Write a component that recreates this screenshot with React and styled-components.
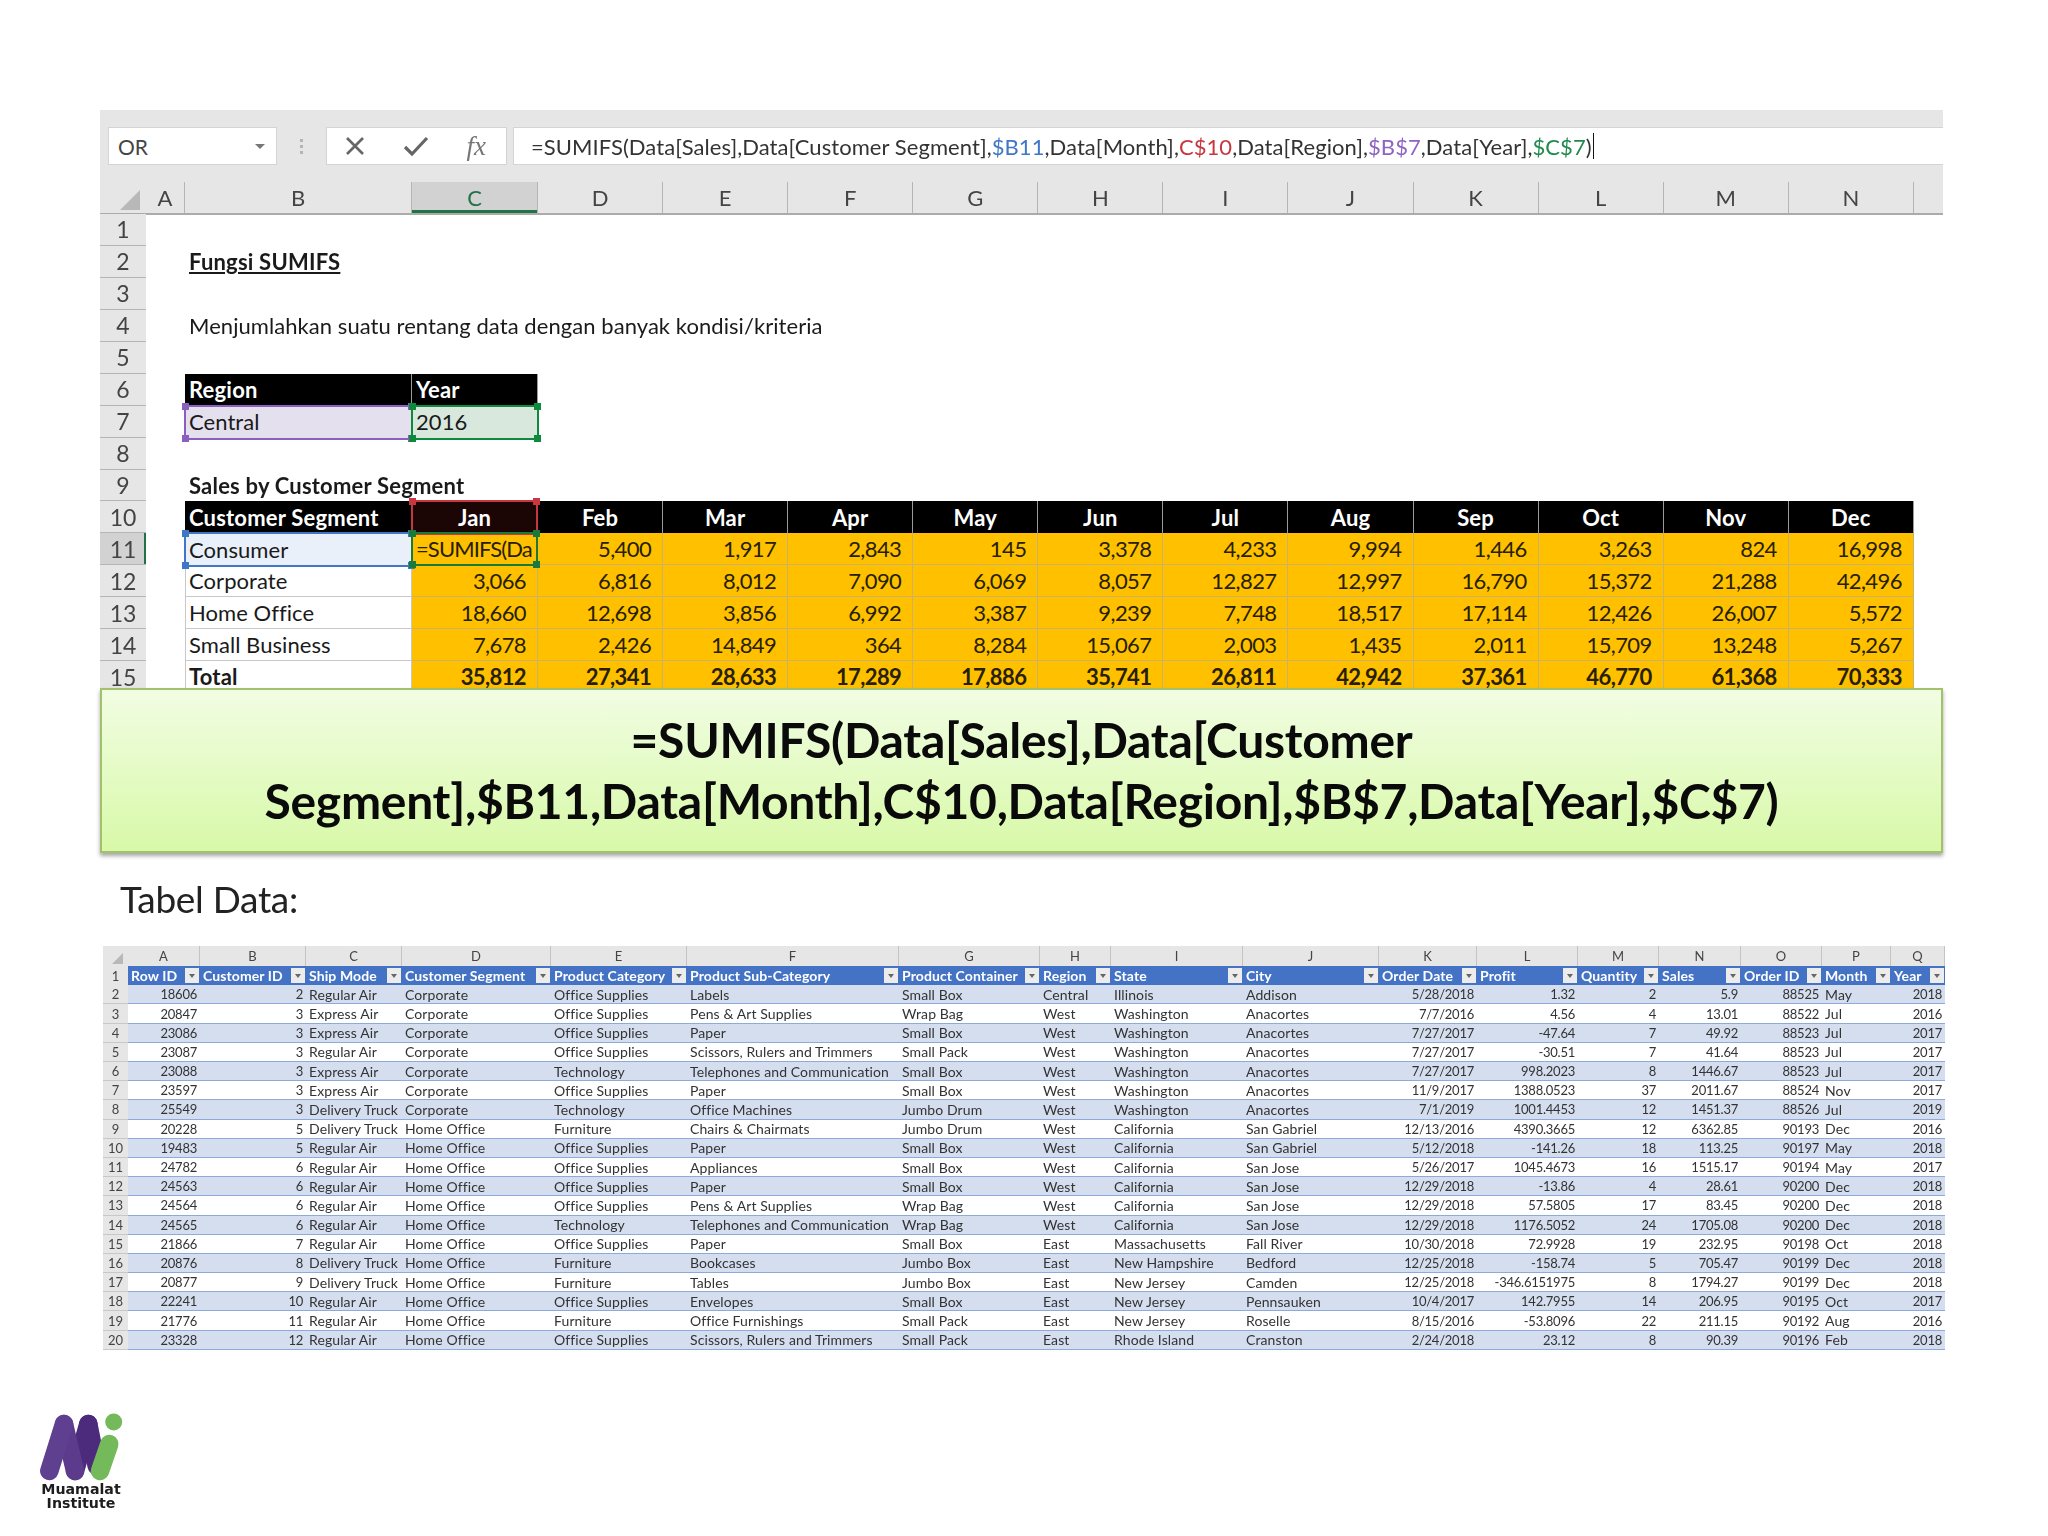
import React from "react";
import styled, { createGlobalStyle, css } from "styled-components";

const GlobalStyle = createGlobalStyle`
  html, body {
    margin: 0;
    padding: 0;
    background: #fff;
  }
  body {
    font-family: Lato, "Open Sans", sans-serif;
    color: #1a1a1a;
  }
`;

const MONTHS = ["Jan", "Feb", "Mar", "Apr", "May", "Jun", "Jul", "Aug", "Sep", "Oct", "Nov", "Dec"];
const LETTERS = ["A", "B", "C", "D", "E", "F", "G", "H", "I", "J", "K", "L", "M", "N"];

const SALES = [
  ["Corporate", "3,066", "6,816", "8,012", "7,090", "6,069", "8,057", "12,827", "12,997", "16,790", "15,372", "21,288", "42,496"],
  ["Home Office", "18,660", "12,698", "3,856", "6,992", "3,387", "9,239", "7,748", "18,517", "17,114", "12,426", "26,007", "5,572"],
  ["Small Business", "7,678", "2,426", "14,849", "364", "8,284", "15,067", "2,003", "1,435", "2,011", "15,709", "13,248", "5,267"],
];
const CONSUMER = ["5,400", "1,917", "2,843", "145", "3,378", "4,233", "9,994", "1,446", "3,263", "824", "16,998"];
const TOTALS = ["35,812", "27,341", "28,633", "17,289", "17,886", "35,741", "26,811", "42,942", "37,361", "46,770", "61,368", "70,333"];

const DATA_COLUMNS = [
  ["A", "Row ID", 72, true],
  ["B", "Customer ID", 106, true],
  ["C", "Ship Mode", 96, false],
  ["D", "Customer Segment", 149, false],
  ["E", "Product Category", 136, false],
  ["F", "Product Sub-Category", 212, false],
  ["G", "Product Container", 141, false],
  ["H", "Region", 71, false],
  ["I", "State", 132, false],
  ["J", "City", 136, false],
  ["K", "Order Date", 98, true],
  ["L", "Profit", 101, true],
  ["M", "Quantity", 81, true],
  ["N", "Sales", 82, true],
  ["O", "Order ID", 81, true],
  ["P", "Month", 69, false],
  ["Q", "Year", 54, true],
];

const DATA_ROWS = [
  ["18606", "2", "Regular Air", "Corporate", "Office Supplies", "Labels", "Small Box", "Central", "Illinois", "Addison", "5/28/2018", "1.32", "2", "5.9", "88525", "May", "2018"],
  ["20847", "3", "Express Air", "Corporate", "Office Supplies", "Pens & Art Supplies", "Wrap Bag", "West", "Washington", "Anacortes", "7/7/2016", "4.56", "4", "13.01", "88522", "Jul", "2016"],
  ["23086", "3", "Express Air", "Corporate", "Office Supplies", "Paper", "Small Box", "West", "Washington", "Anacortes", "7/27/2017", "-47.64", "7", "49.92", "88523", "Jul", "2017"],
  ["23087", "3", "Regular Air", "Corporate", "Office Supplies", "Scissors, Rulers and Trimmers", "Small Pack", "West", "Washington", "Anacortes", "7/27/2017", "-30.51", "7", "41.64", "88523", "Jul", "2017"],
  ["23088", "3", "Express Air", "Corporate", "Technology", "Telephones and Communication", "Small Box", "West", "Washington", "Anacortes", "7/27/2017", "998.2023", "8", "1446.67", "88523", "Jul", "2017"],
  ["23597", "3", "Express Air", "Corporate", "Office Supplies", "Paper", "Small Box", "West", "Washington", "Anacortes", "11/9/2017", "1388.0523", "37", "2011.67", "88524", "Nov", "2017"],
  ["25549", "3", "Delivery Truck", "Corporate", "Technology", "Office Machines", "Jumbo Drum", "West", "Washington", "Anacortes", "7/1/2019", "1001.4453", "12", "1451.37", "88526", "Jul", "2019"],
  ["20228", "5", "Delivery Truck", "Home Office", "Furniture", "Chairs & Chairmats", "Jumbo Drum", "West", "California", "San Gabriel", "12/13/2016", "4390.3665", "12", "6362.85", "90193", "Dec", "2016"],
  ["19483", "5", "Regular Air", "Home Office", "Office Supplies", "Paper", "Small Box", "West", "California", "San Gabriel", "5/12/2018", "-141.26", "18", "113.25", "90197", "May", "2018"],
  ["24782", "6", "Regular Air", "Home Office", "Office Supplies", "Appliances", "Small Box", "West", "California", "San Jose", "5/26/2017", "1045.4673", "16", "1515.17", "90194", "May", "2017"],
  ["24563", "6", "Regular Air", "Home Office", "Office Supplies", "Paper", "Small Box", "West", "California", "San Jose", "12/29/2018", "-13.86", "4", "28.61", "90200", "Dec", "2018"],
  ["24564", "6", "Regular Air", "Home Office", "Office Supplies", "Pens & Art Supplies", "Wrap Bag", "West", "California", "San Jose", "12/29/2018", "57.5805", "17", "83.45", "90200", "Dec", "2018"],
  ["24565", "6", "Regular Air", "Home Office", "Technology", "Telephones and Communication", "Wrap Bag", "West", "California", "San Jose", "12/29/2018", "1176.5052", "24", "1705.08", "90200", "Dec", "2018"],
  ["21866", "7", "Regular Air", "Home Office", "Office Supplies", "Paper", "Small Box", "East", "Massachusetts", "Fall River", "10/30/2018", "72.9928", "19", "232.95", "90198", "Oct", "2018"],
  ["20876", "8", "Delivery Truck", "Home Office", "Furniture", "Bookcases", "Jumbo Box", "East", "New Hampshire", "Bedford", "12/25/2018", "-158.74", "5", "705.47", "90199", "Dec", "2018"],
  ["20877", "9", "Delivery Truck", "Home Office", "Furniture", "Tables", "Jumbo Box", "East", "New Jersey", "Camden", "12/25/2018", "-346.6151975", "8", "1794.27", "90199", "Dec", "2018"],
  ["22241", "10", "Regular Air", "Home Office", "Office Supplies", "Envelopes", "Small Box", "East", "New Jersey", "Pennsauken", "10/4/2017", "142.7955", "14", "206.95", "90195", "Oct", "2017"],
  ["21776", "11", "Regular Air", "Home Office", "Furniture", "Office Furnishings", "Small Pack", "East", "New Jersey", "Roselle", "8/15/2016", "-53.8096", "22", "211.15", "90192", "Aug", "2016"],
  ["23328", "12", "Regular Air", "Home Office", "Office Supplies", "Scissors, Rulers and Trimmers", "Small Pack", "East", "Rhode Island", "Cranston", "2/24/2018", "23.12", "8", "90.39", "90196", "Feb", "2018"],
];

const dataTemplate = `25px ${DATA_COLUMNS.map((c) => c[2] + "px").join(" ")}`;

const Page = styled.div`
  width: 2048px;
  height: 1536px;
  padding-top: 110px;
  box-sizing: border-box;
  overflow: hidden;
  filter: blur(0.35px);
`;

const Sheet = styled.section`
  margin-left: 100px;
  width: 1843px;
  background: #fff;
`;

const FormulaBar = styled.div`
  height: 72px;
  box-sizing: border-box;
  background: #e6e6e6;
  padding: 17px 0 0 8px;
  display: flex;
  align-items: flex-start;
`;

const NameBox = styled.div`
  width: 169px;
  height: 38px;
  box-sizing: border-box;
  background: #fff;
  border: 1px solid #d4d4d4;
  padding: 0 11px 0 9px;
  display: flex;
  align-items: center;
  justify-content: space-between;
  font-size: 21px;
  color: #444;
`;

const Caret = styled.span`
  width: 0;
  height: 0;
  border-left: 5px solid transparent;
  border-right: 5px solid transparent;
  border-top: 5px solid #777;
`;

const Grip = styled.div`
  width: 49px;
  height: 38px;
  display: flex;
  flex-direction: column;
  align-items: center;
  justify-content: center;
  gap: 3px;
  i {
    width: 3px;
    height: 3px;
    background: #b5b5b5;
  }
`;

const ActionBox = styled.div`
  width: 181px;
  height: 38px;
  box-sizing: border-box;
  background: #fff;
  border: 1px solid #d4d4d4;
  display: flex;
  align-items: center;
  justify-content: space-between;
  padding: 0 20px 0 17px;
  color: #666;
`;

const Fx = styled.span`
  font-family: "Liberation Serif", serif;
  font-style: italic;
  font-size: 27px;
  color: #777;
  line-height: 1;
`;

const FormulaInput = styled.div`
  flex: 1;
  margin-left: 6px;
  height: 38px;
  box-sizing: border-box;
  background: #fff;
  border: 1px solid #d4d4d4;
  border-right: 0;
  padding-left: 17px;
  display: flex;
  align-items: center;
  font-size: 22px;
  letter-spacing: 0.06px;
  color: #333;
  white-space: pre;
`;

const Ref = styled.span`
  color: ${(p) => p.$color};
`;

const TextCaret = styled.span`
  width: 1px;
  height: 26px;
  background: #111;
  margin-left: 1px;
`;

const sheetGrid = css`
  display: grid;
  grid-template-columns: 46px 39px 227px 126px repeat(11, 125.09px) 1fr;
`;

const HeadRow = styled.div`
  ${sheetGrid}
  height: 31px;
  background: #e6e6e6;
  border-bottom: 2px solid #ababab;
  box-sizing: content-box;
  margin-bottom: -1px;
`;

const Corner = styled.div`
  position: relative;
  &::after {
    content: "";
    position: absolute;
    right: 6px;
    bottom: 3px;
    border-style: solid;
    border-width: 0 0 20px 20px;
    border-color: transparent transparent #b8b8b8 transparent;
  }
`;

const ColHead = styled.div`
  display: flex;
  align-items: center;
  justify-content: center;
  font-size: 22px;
  border-right: 1px solid #b5b5b5;
  background: ${(p) => (p.$active ? "#d2d2d2" : "transparent")};
  box-shadow: ${(p) => (p.$active ? "inset 0 -3px 0 #217346" : "none")};
  color: ${(p) => (p.$active ? "#217346" : "#444")};
`;

const Row = styled.div`
  ${sheetGrid}
  height: 31.95px;
`;

const RowHead = styled.div`
  display: flex;
  align-items: center;
  justify-content: center;
  font-size: 23px;
  box-sizing: border-box;
  border-bottom: 1px solid #b5b5b5;
  background: ${(p) => (p.$active ? "#d2d2d2" : "#e6e6e6")};
  color: #444;
  box-shadow: ${(p) => (p.$active ? "inset -2px 0 0 #217346" : "none")};
`;

const cellKinds = {
  plain: css`
    background: transparent;
  `,
  label: css`
    background: #fff;
    border-left: 1px solid #c8c8c8;
    border-right: 1px solid #c8c8c8;
    border-bottom: 1px solid #c8c8c8;
    padding-left: 3px;
  `,
  black: css`
    background: #000;
    color: #fff;
    font-weight: 700;
    border-right: 1px solid #9a9a9a;
  `,
  amber: css`
    background: #ffc000;
    border-right: 1px solid #cbb26a;
    border-bottom: 1px solid #cbb26a;
    color: #262000;
  `,
};

const Cell = styled.div`
  position: relative;
  box-sizing: border-box;
  min-width: 0;
  display: flex;
  align-items: center;
  padding: ${(p) => (p.$right ? "0 11px 0 0" : "0 0 0 4px")};
  justify-content: ${(p) => (p.$right ? "flex-end" : p.$center ? "center" : "flex-start")};
  ${(p) => p.$center && "padding: 0;"}
  font-size: 22px;
  letter-spacing: ${(p) => (p.$right ? "-0.6px" : p.$bold || p.$kind === "black" ? "0.2px" : "0.06px")};
  white-space: nowrap;
  font-weight: ${(p) => (p.$bold ? 700 : 400)};
  text-decoration: ${(p) => (p.$under ? "underline" : "none")};
  ${(p) => cellKinds[p.$kind || "plain"]}
  ${(p) => p.$fill && `background: ${p.$fill};`}
`;

const TightText = styled.span`
  letter-spacing: -0.9px;
`;

const RangeBox = styled.div`
  position: absolute;
  inset: -1px -1px -2px -1px;
  border: 2px solid ${(p) => p.$color};
  pointer-events: none;
  z-index: 3;
`;

const Handle = styled.i`
  position: absolute;
  width: 7px;
  height: 7px;
  background: ${(p) => p.$color};
  ${(p) => (p.$top ? "top: -4px;" : "bottom: -4px;")}
  ${(p) => (p.$left ? "left: -4px;" : "right: -4px;")}
`;

const Range = ({ color }) => (
  <RangeBox $color={color}>
    <Handle $color={color} $top $left />
    <Handle $color={color} $top />
    <Handle $color={color} $left />
    <Handle $color={color} />
  </RangeBox>
);

/* sits over the bottom few pixels of row 15 */
const Callout = styled.div`
  position: relative;
  z-index: 5;
  margin: -5.3px 0 0 100px;
  width: 1843px;
  height: 165px;
  box-sizing: border-box;
  background: linear-gradient(#f1fde3, #d8f9a8);
  border: 2px solid #a3c06a;
  box-shadow: 0 3px 4px rgba(0, 0, 0, 0.35);
  display: flex;
  align-items: center;
  justify-content: center;
  text-align: center;
  font-size: 48px;
  font-weight: 700;
  line-height: 61px;
  letter-spacing: -0.28px;
  color: #0a0a0a;
`;

const SectionTitle = styled.h2`
  margin: 23px 0 25px 120px;
  font-size: 37px;
  line-height: 45px;
  font-weight: 400;
  letter-spacing: -0.3px;
  color: #222;
`;

const DataTable = styled.section`
  margin-left: 103px;
  width: max-content;
`;

const DataHeadRow = styled.div`
  display: grid;
  grid-template-columns: ${dataTemplate};
  height: 20px;
  background: #e6e6e6;
`;

const DataCorner = styled.div`
  position: relative;
  &::after {
    content: "";
    position: absolute;
    right: 5px;
    bottom: 2px;
    border-style: solid;
    border-width: 0 0 11px 11px;
    border-color: transparent transparent #b8b8b8 transparent;
  }
`;

const DataLetter = styled.div`
  display: flex;
  align-items: center;
  justify-content: center;
  font-size: 13px;
  color: #444;
  border-right: 1px solid #c4c4c4;
`;

const DataRow = styled.div`
  display: grid;
  grid-template-columns: ${dataTemplate};
  height: ${(p) => (p.$title ? "19.5px" : "19.2px")};
  box-sizing: border-box;
  font-size: 14px;
  letter-spacing: 0.1px;
  background: ${(p) => (p.$title ? "#4472c4" : p.$band ? "#d4deef" : "#fff")};
  color: ${(p) => (p.$title ? "#fff" : "#333")};
  font-weight: ${(p) => (p.$title ? 700 : 400)};
  ${(p) => !p.$title && "border-bottom: 1px solid #8ea9db;"}
`;

const DataRowHead = styled.div`
  background: #e6e6e6;
  display: flex;
  align-items: center;
  justify-content: center;
  font-size: 13px;
  font-weight: 400;
  letter-spacing: 0;
  color: #444;
  box-shadow: 0 1px 0 #c8c8c8;
  position: relative;
`;

const DataCell = styled.div`
  display: flex;
  align-items: center;
  white-space: nowrap;
  min-width: 0;
  padding: 0 3px;
  justify-content: ${(p) => (p.$right ? "flex-end" : "flex-start")};
  ${(p) => p.$right && "font-size: 13px; letter-spacing: -0.24px;"}
`;

const TitleCell = styled.div`
  display: flex;
  align-items: center;
  justify-content: space-between;
  white-space: nowrap;
  min-width: 0;
  padding-left: 3px;
  padding-right: 1px;
`;

const FilterBtn = styled.span`
  flex: none;
  width: 14px;
  height: 15px;
  background: #ececec;
  display: flex;
  align-items: center;
  justify-content: center;
  &::after {
    content: "";
    border-left: 3.5px solid transparent;
    border-right: 3.5px solid transparent;
    border-top: 4px solid #666;
  }
`;

const LogoWrap = styled.div`
  margin: 62px 0 0 38px;
  width: 86px;
  display: flex;
  flex-direction: column;
  align-items: center;
`;

const LogoText = styled.div`
  font-family: "DejaVu Sans", sans-serif;
  font-weight: 700;
  font-size: 14.2px;
  line-height: 14.4px;
  text-align: center;
  color: #1d1d1d;
  margin-top: -2px;
`;

const Logo = () => (
  <LogoWrap>
    <svg width="86" height="72" viewBox="0 0 86 72" aria-hidden="true">
      <g fill="none" strokeLinecap="round" strokeWidth="18.5">
        <path d="M58.7 54L50.3 12" stroke="#4c2a7c" />
        <path d="M37 59L50.3 12" stroke="#4c2a7c" />
        <path d="M26 12L37 59" stroke="#5c3a8c" />
        <path d="M11.3 59L26 12" stroke="#5f3f8f" />
        <path d="M62 59L71.3 32" stroke="#74b95a" />
      </g>
      <circle cx="75.7" cy="10" r="8.5" fill="#74b95a" />
    </svg>
    <LogoText>
      Muamalat
      <br />
      Institute
    </LogoText>
  </LogoWrap>
);

const App = () => (
  <>
    <GlobalStyle />
    <Page>
      <Sheet>
        <FormulaBar>
          <NameBox>
            OR
            <Caret />
          </NameBox>
          <Grip>
            <i />
            <i />
            <i />
          </Grip>
          <ActionBox>
            <svg width="22" height="22" viewBox="0 0 22 22" aria-hidden="true">
              <path d="M3 3L19 19M19 3L3 19" stroke="#666" strokeWidth="2.6" fill="none" />
            </svg>
            <svg width="26" height="22" viewBox="0 0 26 22" aria-hidden="true">
              <path d="M2 12L9 19L24 3" stroke="#666" strokeWidth="3.2" fill="none" />
            </svg>
            <Fx>fx</Fx>
          </ActionBox>
          <FormulaInput>
            =SUMIFS(Data[Sales],Data[Customer Segment],
            <Ref $color="#3f76c6">$B11</Ref>
            ,Data[Month],
            <Ref $color="#c8363f">C$10</Ref>
            ,Data[Region],
            <Ref $color="#8e63c4">$B$7</Ref>
            ,Data[Year],
            <Ref $color="#1f8a4c">$C$7</Ref>)
            <TextCaret />
          </FormulaInput>
        </FormulaBar>

        <HeadRow>
          <Corner />
          {LETTERS.map((l) => (
            <ColHead key={l} $active={l === "C"}>
              {l}
            </ColHead>
          ))}
          <div />
        </HeadRow>

        <Row>
          <RowHead>1</RowHead>
        </Row>
        <Row>
          <RowHead>2</RowHead>
          <Cell />
          <Cell $bold $under>
            Fungsi SUMIFS
          </Cell>
        </Row>
        <Row>
          <RowHead>3</RowHead>
        </Row>
        <Row>
          <RowHead>4</RowHead>
          <Cell />
          <Cell>Menjumlahkan suatu rentang data dengan banyak kondisi/kriteria</Cell>
        </Row>
        <Row>
          <RowHead>5</RowHead>
        </Row>
        <Row>
          <RowHead>6</RowHead>
          <Cell />
          <Cell $kind="black">Region</Cell>
          <Cell $kind="black">Year</Cell>
        </Row>
        <Row>
          <RowHead>7</RowHead>
          <Cell />
          <Cell $fill="#e4e0ee">
            Central
            <Range color="#8a5fc0" />
          </Cell>
          <Cell $fill="#d9e8dd">
            2016
            <Range color="#0f8a3c" />
          </Cell>
        </Row>
        <Row>
          <RowHead>8</RowHead>
        </Row>
        <Row>
          <RowHead>9</RowHead>
          <Cell />
          <Cell $bold>Sales by Customer Segment</Cell>
        </Row>
        <Row>
          <RowHead>10</RowHead>
          <Cell />
          <Cell $kind="black">Customer Segment</Cell>
          {MONTHS.map((m, i) => (
            <Cell key={m} $kind="black" $center $fill={i === 0 ? "#1c0505" : undefined}>
              {m}
              {i === 0 && <Range color="#c8363f" />}
            </Cell>
          ))}
        </Row>
        <Row>
          <RowHead $active>11</RowHead>
          <Cell />
          <Cell $fill="#e9f0fa">
            Consumer
            <Range color="#3f76c6" />
          </Cell>
          <Cell $kind="amber">
            <TightText>=SUMIFS(Da</TightText>
            <Range color="#1a7a3c" />
          </Cell>
          {CONSUMER.map((v, i) => (
            <Cell key={i} $kind="amber" $right>
              {v}
            </Cell>
          ))}
        </Row>
        {SALES.map((r, n) => (
          <Row key={r[0]}>
            <RowHead>{12 + n}</RowHead>
            <Cell />
            <Cell $kind="label">{r[0]}</Cell>
            {r.slice(1).map((v, i) => (
              <Cell key={i} $kind="amber" $right>
                {v}
              </Cell>
            ))}
          </Row>
        ))}
        <Row>
          <RowHead>15</RowHead>
          <Cell />
          <Cell $kind="label" $bold>
            Total
          </Cell>
          {TOTALS.map((v, i) => (
            <Cell key={i} $kind="amber" $right $bold>
              {v}
            </Cell>
          ))}
        </Row>
      </Sheet>

      <Callout>
        =SUMIFS(Data[Sales],Data[Customer
        <br />
        Segment],$B11,Data[Month],C$10,Data[Region],$B$7,Data[Year],$C$7)
      </Callout>

      <SectionTitle>Tabel Data:</SectionTitle>

      <DataTable>
        <DataHeadRow>
          <DataCorner />
          {DATA_COLUMNS.map((c) => (
            <DataLetter key={c[0]}>{c[0]}</DataLetter>
          ))}
        </DataHeadRow>
        <DataRow $title>
          <DataRowHead>1</DataRowHead>
          {DATA_COLUMNS.map((c) => (
            <TitleCell key={c[0]}>
              {c[1]}
              <FilterBtn />
            </TitleCell>
          ))}
        </DataRow>
        {DATA_ROWS.map((row, n) => (
          <DataRow key={n} $band={n % 2 === 0}>
            <DataRowHead>{n + 2}</DataRowHead>
            {row.map((v, i) => (
              <DataCell key={i} $right={DATA_COLUMNS[i][3]}>
                {v}
              </DataCell>
            ))}
          </DataRow>
        ))}
      </DataTable>

      <Logo />
    </Page>
  </>
);

export default App;
